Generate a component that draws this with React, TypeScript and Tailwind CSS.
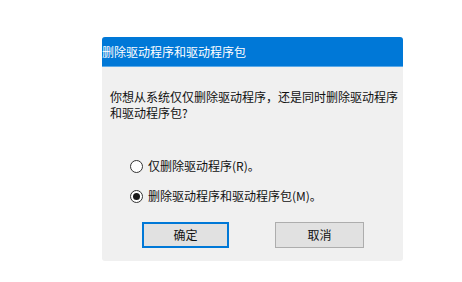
import React from "react";

const font = { fontFamily: '"Noto Sans CJK SC", "Noto Sans", sans-serif' };

const Radio: React.FC<{ checked?: boolean; label: string }> = ({ checked, label }) => (
  <label className="flex items-center h-[16px] gap-[5px] text-[12px] text-[#111]">
    <span className="w-[13px] h-[13px] rounded-full border border-[#333] bg-white flex items-center justify-center">
      {checked && <span className="w-[7px] h-[7px] rounded-full bg-[#1b1b1b]" />}
    </span>
    <span className="leading-none">{label}</span>
  </label>
);

export default function App() {
  return (
    <div className="w-[462px] h-[282px] bg-white overflow-hidden pt-[37px] pl-[102px]" style={font}>
      <div className="w-[301px] h-[224px] bg-[#f0f0f0] rounded-[3px] overflow-hidden flex flex-col">
        {/* Title bar */}
        <div className="h-[30px] bg-[#0078d7] border-b border-[#5aa9e8] flex items-center">
          <span className="text-[12px] text-white whitespace-nowrap leading-none">
            删除驱动程序和驱动程序包
          </span>
        </div>

        {/* Message */}
        <p className="pt-[22px] pl-[8px] text-[12px] leading-[16px] text-[#111] whitespace-nowrap">
          你想从系统仅仅删除驱动程序，还是同时删除驱动程序
          <br />
          和驱动程序包?
        </p>

        {/* Options */}
        <div className="mt-[37px] pl-[28px] flex flex-col gap-[14px]">
          <Radio label="仅删除驱动程序(R)。" />
          <Radio checked label="删除驱动程序和驱动程序包(M)。" />
        </div>

        {/* Buttons */}
        <div className="mt-[18px] pl-[40px] flex gap-[46px]">
          <button className="w-[87px] h-[26px] bg-[#e1e1e1] border-2 border-[#0078d7] text-[12px] text-[#111]">
            确定
          </button>
          <button className="w-[89px] h-[26px] bg-[#e1e1e1] border border-[#adadad] text-[12px] text-[#111]">
            取消
          </button>
        </div>
      </div>
    </div>
  );
}
